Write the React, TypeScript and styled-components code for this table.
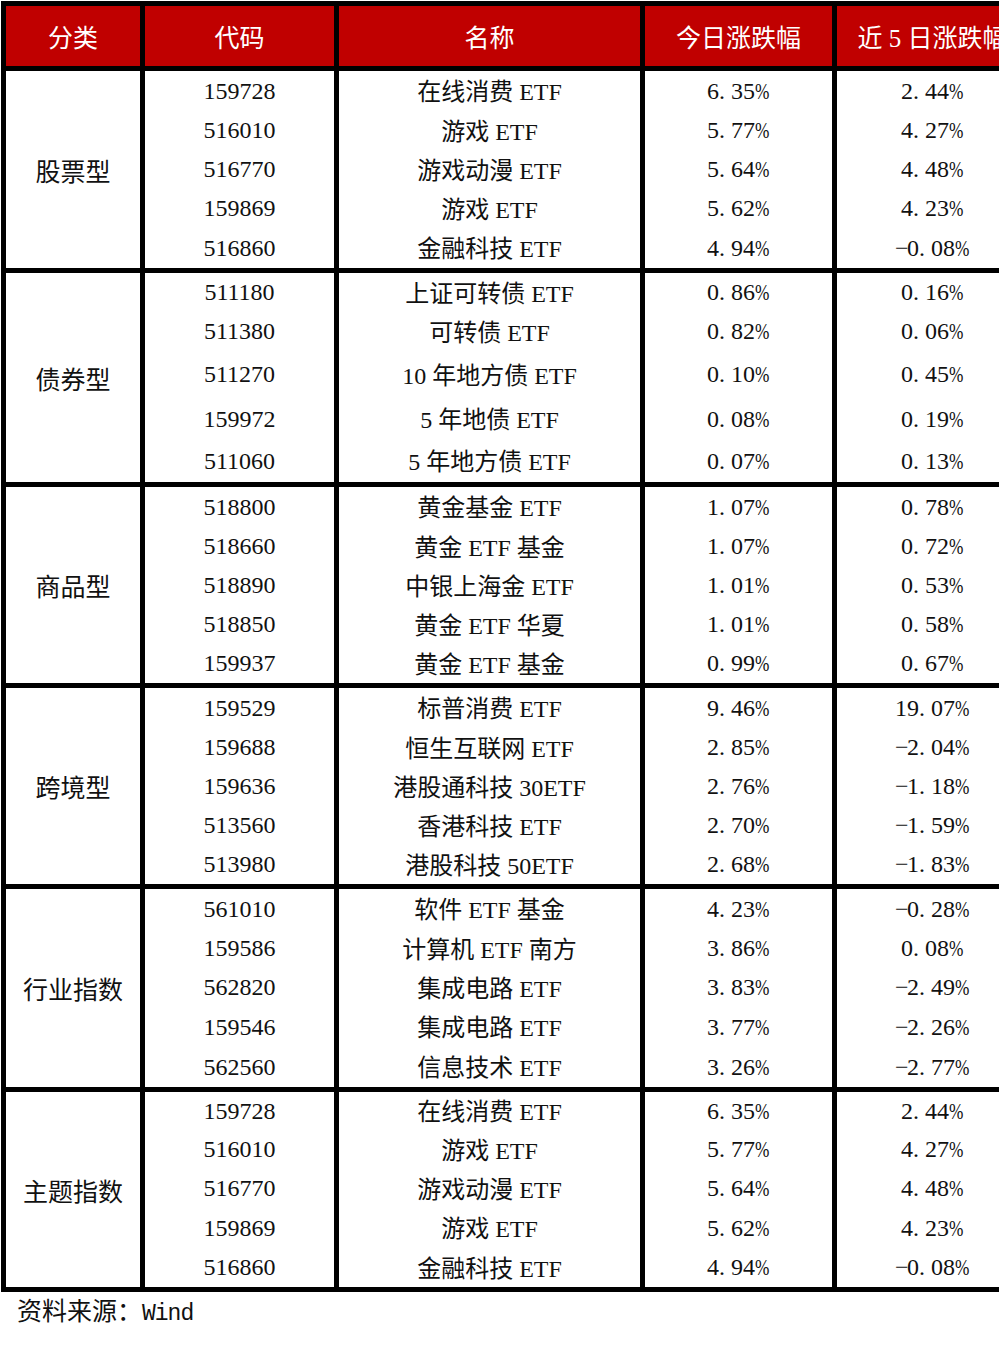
import React from 'react';
import styled, { createGlobalStyle } from 'styled-components';

const GlobalStyle = createGlobalStyle`
  html, body {
    margin: 0;
    padding: 0;
    background: #ffffff;
    overflow: hidden;
  }
  body {
    font-family: 'Liberation Serif', 'Noto Sans CJK SC', serif;
    color: #111111;
  }
`;

type Row = [string, string, string, string];

interface Group {
  name: string;
  heights: number[];
  rows: Row[];
}

const themeRows: Row[] = [
  ['159728', '在线消费 ETF', '6.35%', '2.44%'],
  ['516010', '游戏 ETF', '5.77%', '4.27%'],
  ['516770', '游戏动漫 ETF', '5.64%', '4.48%'],
  ['159869', '游戏 ETF', '5.62%', '4.23%'],
  ['516860', '金融科技 ETF', '4.94%', '-0.08%'],
];

const groups: Group[] = [
  { name: '股票型', heights: [40, 39, 39, 39, 40], rows: themeRows },
  {
    name: '债券型',
    heights: [39, 39, 47, 42, 42],
    rows: [
      ['511180', '上证可转债 ETF', '0.86%', '0.16%'],
      ['511380', '可转债 ETF', '0.82%', '0.06%'],
      ['511270', '10 年地方债 ETF', '0.10%', '0.45%'],
      ['159972', '5 年地债 ETF', '0.08%', '0.19%'],
      ['511060', '5 年地方债 ETF', '0.07%', '0.13%'],
    ],
  },
  {
    name: '商品型',
    heights: [40, 39, 39, 39, 39],
    rows: [
      ['518800', '黄金基金 ETF', '1.07%', '0.78%'],
      ['518660', '黄金 ETF 基金', '1.07%', '0.72%'],
      ['518890', '中银上海金 ETF', '1.01%', '0.53%'],
      ['518850', '黄金 ETF 华夏', '1.01%', '0.58%'],
      ['159937', '黄金 ETF 基金', '0.99%', '0.67%'],
    ],
  },
  {
    name: '跨境型',
    heights: [40, 39, 39, 39, 39],
    rows: [
      ['159529', '标普消费 ETF', '9.46%', '19.07%'],
      ['159688', '恒生互联网 ETF', '2.85%', '-2.04%'],
      ['159636', '港股通科技 30ETF', '2.76%', '-1.18%'],
      ['513560', '香港科技 ETF', '2.70%', '-1.59%'],
      ['513980', '港股科技 50ETF', '2.68%', '-1.83%'],
    ],
  },
  {
    name: '行业指数',
    heights: [40, 39, 39, 40, 40],
    rows: [
      ['561010', '软件 ETF 基金', '4.23%', '-0.28%'],
      ['159586', '计算机 ETF 南方', '3.86%', '0.08%'],
      ['562820', '集成电路 ETF', '3.83%', '-2.49%'],
      ['159546', '集成电路 ETF', '3.77%', '-2.26%'],
      ['562560', '信息技术 ETF', '3.26%', '-2.77%'],
    ],
  },
  { name: '主题指数', heights: [38, 39, 39, 40, 39], rows: themeRows },
];

// widths include the 5px right border
const colWidths = [139, 194, 306, 192, 196];
const headers = ['分类', '代码', '名称', '今日涨跌幅', '近 5 日涨跌幅'];

const Page = styled.div`
  width: 999px;
  overflow: hidden;
  padding-top: 1px;
`;

const Sheet = styled.div`
  width: 1032px;
  margin-left: 1px;
  border-left: 5px solid #000;
  border-top: 5px solid #000;
  display: flex;
  flex-direction: column;
`;

const HeaderRow = styled.div`
  display: flex;
  height: 65px;
  border-bottom: 5px solid #000;
  box-sizing: border-box;
`;

const HeadCell = styled.div<{ width: number }>`
  width: ${({ width }) => width}px;
  flex: none;
  box-sizing: border-box;
  border-right: 5px solid #000;
  background: #c00000;
  color: #ffffff;
  font-size: 25px;
  display: flex;
  align-items: center;
  justify-content: center;
  white-space: nowrap;
  overflow: hidden;
`;

const GroupBlock = styled.div`
  display: flex;
  border-bottom: 5px solid #000;
`;

const Category = styled.div`
  width: 139px;
  flex: none;
  box-sizing: border-box;
  border-right: 5px solid #000;
  display: flex;
  align-items: center;
  justify-content: center;
  font-size: 25px;
  color: #111;
`;

const Rows = styled.div`
  display: flex;
  flex-direction: column;
`;

const DataRow = styled.div<{ height: number }>`
  display: flex;
  height: ${({ height }) => height}px;
`;

const Cell = styled.div<{ width: number; shift?: number }>`
  width: ${({ width }) => width}px;
  flex: none;
  box-sizing: border-box;
  border-right: 5px solid #000;
  display: flex;
  align-items: center;
  justify-content: center;
  font-size: 24px;
  white-space: nowrap;
  padding-bottom: ${({ shift }) => shift ?? 0}px;
`;

const Dot = styled.span`
  display: inline-block;
  width: 0.5em;
  text-align: left;
`;

const Minus = styled.span`
  display: inline-block;
  width: 0.5em;
  text-align: center;
`;

const PercentSign = styled.span`
  display: inline-block;
  width: 0.62em;
  transform: scaleX(0.72);
  transform-origin: left center;
`;

const Footer = styled.div`
  padding: 4px 0 0 17px;
  font-size: 25px;
  line-height: 32px;
  color: #111;
`;

const Mono = styled.span`
  font-family: 'Liberation Mono', monospace;
  font-size: 23px;
  letter-spacing: -1px;
`;

function Pct({ value }: { value: string }) {
  return (
    <span>
      {value.split('').map((ch, i) => {
        if (ch === '.') return <Dot key={i}>.</Dot>;
        if (ch === '-') return <Minus key={i}>−</Minus>;
        if (ch === '%') return <PercentSign key={i}>%</PercentSign>;
        return <React.Fragment key={i}>{ch}</React.Fragment>;
      })}
    </span>
  );
}

function App() {
  return (
    <Page>
      <GlobalStyle />
      <Sheet>
        <HeaderRow>
          {headers.map((h, i) => (
            <HeadCell key={h} width={colWidths[i]}>
              {h}
            </HeadCell>
          ))}
        </HeaderRow>
        {groups.map((g) => (
          <GroupBlock key={g.name}>
            <Category>{g.name}</Category>
            <Rows>
              {g.rows.map((r, i) => (
                <DataRow key={r[0] + i} height={g.heights[i]}>
                  <Cell width={colWidths[1]}>{r[0]}</Cell>
                  <Cell width={colWidths[2]} shift={3}>
                    {r[1]}
                  </Cell>
                  <Cell width={colWidths[3]}>
                    <Pct value={r[2]} />
                  </Cell>
                  <Cell width={colWidths[4]}>
                    <Pct value={r[3]} />
                  </Cell>
                </DataRow>
              ))}
            </Rows>
          </GroupBlock>
        ))}
      </Sheet>
      <Footer>
        资料来源：<Mono>Wind</Mono>
      </Footer>
    </Page>
  );
}

export default App;
